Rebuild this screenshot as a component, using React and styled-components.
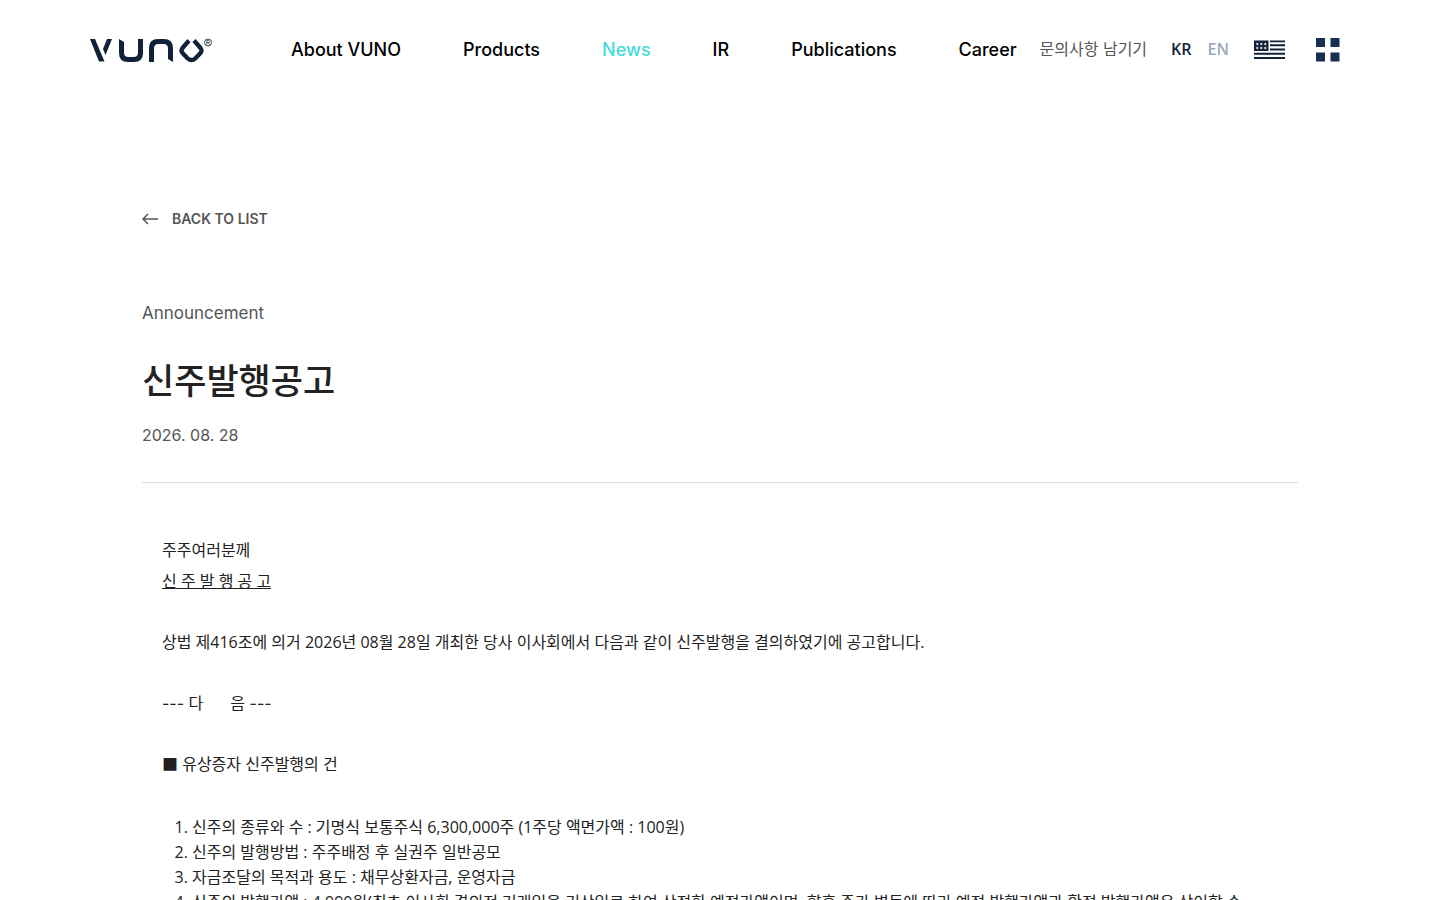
import React from 'react';
import styled, { createGlobalStyle } from 'styled-components';

const navy = '#12213a';
const display = "Inter, 'Noto Sans CJK KR', sans-serif";
const text = "'Open Sans', 'Noto Sans CJK KR', sans-serif";

const GlobalStyle = createGlobalStyle`
  * {
    box-sizing: border-box;
  }
  body {
    margin: 0;
    background: #fff;
    color: #222;
    font-family: ${display};
    font-size: 16px;
  }
  a {
    color: inherit;
    text-decoration: none;
  }
`;

const Header = styled.header`
  display: flex;
  align-items: center;
  height: 100px;
  padding: 0 100px 0 90px;
`;

const LogoLink = styled.a`
  display: flex;
  flex: none;
  margin-right: 79px;
`;

const Nav = styled.nav`
  display: flex;
  gap: 62px;
`;

const NavLink = styled.a`
  color: ${props => (props.$active ? '#44dbda' : '#000')};
  font-size: 18px;
  font-weight: 500;
  line-height: 28px;
  white-space: nowrap;
`;

const Utilities = styled.div`
  display: flex;
  flex: none;
  align-items: center;
  margin-left: auto;
`;

const ContactLink = styled.a`
  margin-right: 24px;
  padding-bottom: 2px;
  color: #555;
  font-family: ${display};
  line-height: 24px;
  white-space: nowrap;
`;

const Languages = styled.div`
  display: flex;
  gap: 16px;
  margin-right: 25px;
  padding-bottom: 2px;
`;

const LanguageButton = styled.button`
  padding: 0;
  border: 0;
  background: none;
  color: ${props => (props.$active ? navy : '#9ba9b8')};
  font-family: ${text};
  font-size: 16px;
  font-weight: 600;
  line-height: 24px;
  cursor: pointer;
`;

const IconLink = styled.a`
  display: flex;
  margin-right: 31px;
`;

const MenuButton = styled.button`
  display: flex;
  padding: 0;
  border: 0;
  background: none;
  cursor: pointer;
`;

const Article = styled.main`
  max-width: 1196px;
  margin: 0 auto;
  padding: 107px 20px 80px;
`;

const BackLink = styled.a`
  display: inline-flex;
  align-items: center;
  gap: 14px;
  color: #555;
  font-size: 14px;
  font-weight: 600;
  line-height: 24px;
`;

const Category = styled.p`
  margin: 70px 0 0;
  color: #555;
  font-size: 17px;
  line-height: 24px;
`;

const Title = styled.h1`
  margin: 30px 0 0;
  font-size: 35px;
  font-weight: 500;
  line-height: 52px;
`;

const PostDate = styled.time`
  display: block;
  margin-top: 16px;
  color: #555;
  line-height: 24px;
`;

const Body = styled.section`
  margin-top: 35px;
  padding: 52px 20px 0;
  border-top: 1px solid #ddd;
  font-family: ${text};
`;

const Paragraph = styled.p`
  margin: 0 0 30px;
  line-height: 31px;
`;

const Separator = styled(Paragraph)`
  font-family: ${display};
`;

const Terms = styled.ol`
  margin: 35px 0 0;
  padding-left: 30px;
  line-height: 25px;
`;

const navItems = ['About VUNO', 'Products', 'News', 'IR', 'Publications', 'Career'];

const terms = [
  '신주의 종류와 수 : 기명식 보통주식 6,300,000주 (1주당 액면가액 : 100원)',
  '신주의 발행방법 : 주주배정 후 실권주 일반공모',
  '자금조달의 목적과 용도 : 채무상환자금, 운영자금',
  '신주의 발행가액 : 4,990원(최초 이사회 결의전 거래일을 기산일로 하여 산정한 예정가액이며, 향후 주가 변동에 따라 예정 발행가액과 확정 발행가액은 상이할 수',
];

const Logo = () => (
  <svg width="122" height="26" viewBox="0 -1 122 26" aria-hidden="true">
    <g fill={navy}>
      <path d="M0 1h5l9.500 22.500H9z" />
      <path d="M17 1h5l-6.500 16-2.500-6z" />
      <path d="M29 1l5 3v10.500q0 4.500 4.500 4.500h5q4.500 0 4.500-4.500V1h5v14q0 9-9 9h-6q-9 0-9-9z" />
      <path d="M59 24V10q0-9 9-9h6q9 0 9 9v14l-5-3V10.500q0-4.500-4.500-4.500h-5q-4.500 0-4.500 4.500V24z" />
    </g>
    <path d="M99 2.500l-6.500 7.500q-2 2.500 0 5l5 5.200q4 3.800 8 0l5-5.200q2-2.500 0-5l-6.500-7.500" fill="none" stroke={navy} strokeWidth="4.300" />
    <circle cx="118" cy="4.500" r="3.500" fill="none" stroke={navy} strokeWidth=".8" />
    <path d="M116.800 6.700V2.500h1.400q1.300 0 1.300 1.100t-1.300 1.100h-1.400m1.500 0l1.300 2" fill="none" stroke={navy} strokeWidth=".7" />
  </svg>
);

const ArrowIcon = () => (
  <svg width="16" height="12" viewBox="0 0 16 12" fill="none" stroke="#555" strokeWidth="1.500" aria-hidden="true">
    <path d="M16 6H1M6 1L1 6l5 5" />
  </svg>
);

const FlagIcon = () => (
  <svg width="31" height="20" viewBox="0 0 31 20" aria-hidden="true">
    <path fill={navy} d="M0 .5h14.500v10.500H0zM16 .5h15v1.800H16zM16 4.200h15v2H16zM16 8.400h15v2.200H16zM0 12.800h31v2H0zM0 17h31v2H0z" />
    <g stroke="#fff" strokeWidth=".9">
      {[4, 8].map(y => [3, 7, 11].map(x => (
        <path key={`${x}-${y}`} d={`M${x - 1} ${y}h2.500M${x + 0.25} ${y - 1.2}v2.400`} />
      )))}
    </g>
  </svg>
);

const GridIcon = () => (
  <svg width="24" height="24" viewBox="0 0 24 24" fill="#17304f" aria-hidden="true">
    <path d="M0 0h9v9H0zM14.500 0h9v9h-9zM0 14.500h9v9H0zM14.500 14.500h9v9h-9z" />
  </svg>
);

const App = () => (
  <>
    <GlobalStyle />
    <Header>
      <LogoLink href="#" aria-label="VUNO"><Logo /></LogoLink>
      <Nav>
        {navItems.map(item => (
          <NavLink key={item} href="#" $active={item === 'News'}>{item}</NavLink>
        ))}
      </Nav>
      <Utilities>
        <ContactLink href="#">문의사항 남기기</ContactLink>
        <Languages>
          <LanguageButton type="button" $active>KR</LanguageButton>
          <LanguageButton type="button">EN</LanguageButton>
        </Languages>
        <IconLink href="#" aria-label="US"><FlagIcon /></IconLink>
        <MenuButton type="button" aria-label="Menu"><GridIcon /></MenuButton>
      </Utilities>
    </Header>
    <Article>
      <BackLink href="#"><ArrowIcon />BACK TO LIST</BackLink>
      <Category>Announcement</Category>
      <Title>신주발행공고</Title>
      <PostDate dateTime="2026-08-28">2026. 08. 28</PostDate>
      <Body>
        <Paragraph>
          주주여러분께<br />
          <u>신 주 발 행 공 고</u>
        </Paragraph>
        <Paragraph>상법 제416조에 의거 2026년 08월 28일 개최한 당사 이사회에서 다음과 같이 신주발행을 결의하였기에 공고합니다.</Paragraph>
        <Separator>--- 다{'\u00a0\u00a0\u00a0\u00a0\u00a0 '}음 ---</Separator>
        <Paragraph>■ 유상증자 신주발행의 건</Paragraph>
        <Terms>
          {terms.map(term => <li key={term}>{term}</li>)}
        </Terms>
      </Body>
    </Article>
  </>
);

export default App;
